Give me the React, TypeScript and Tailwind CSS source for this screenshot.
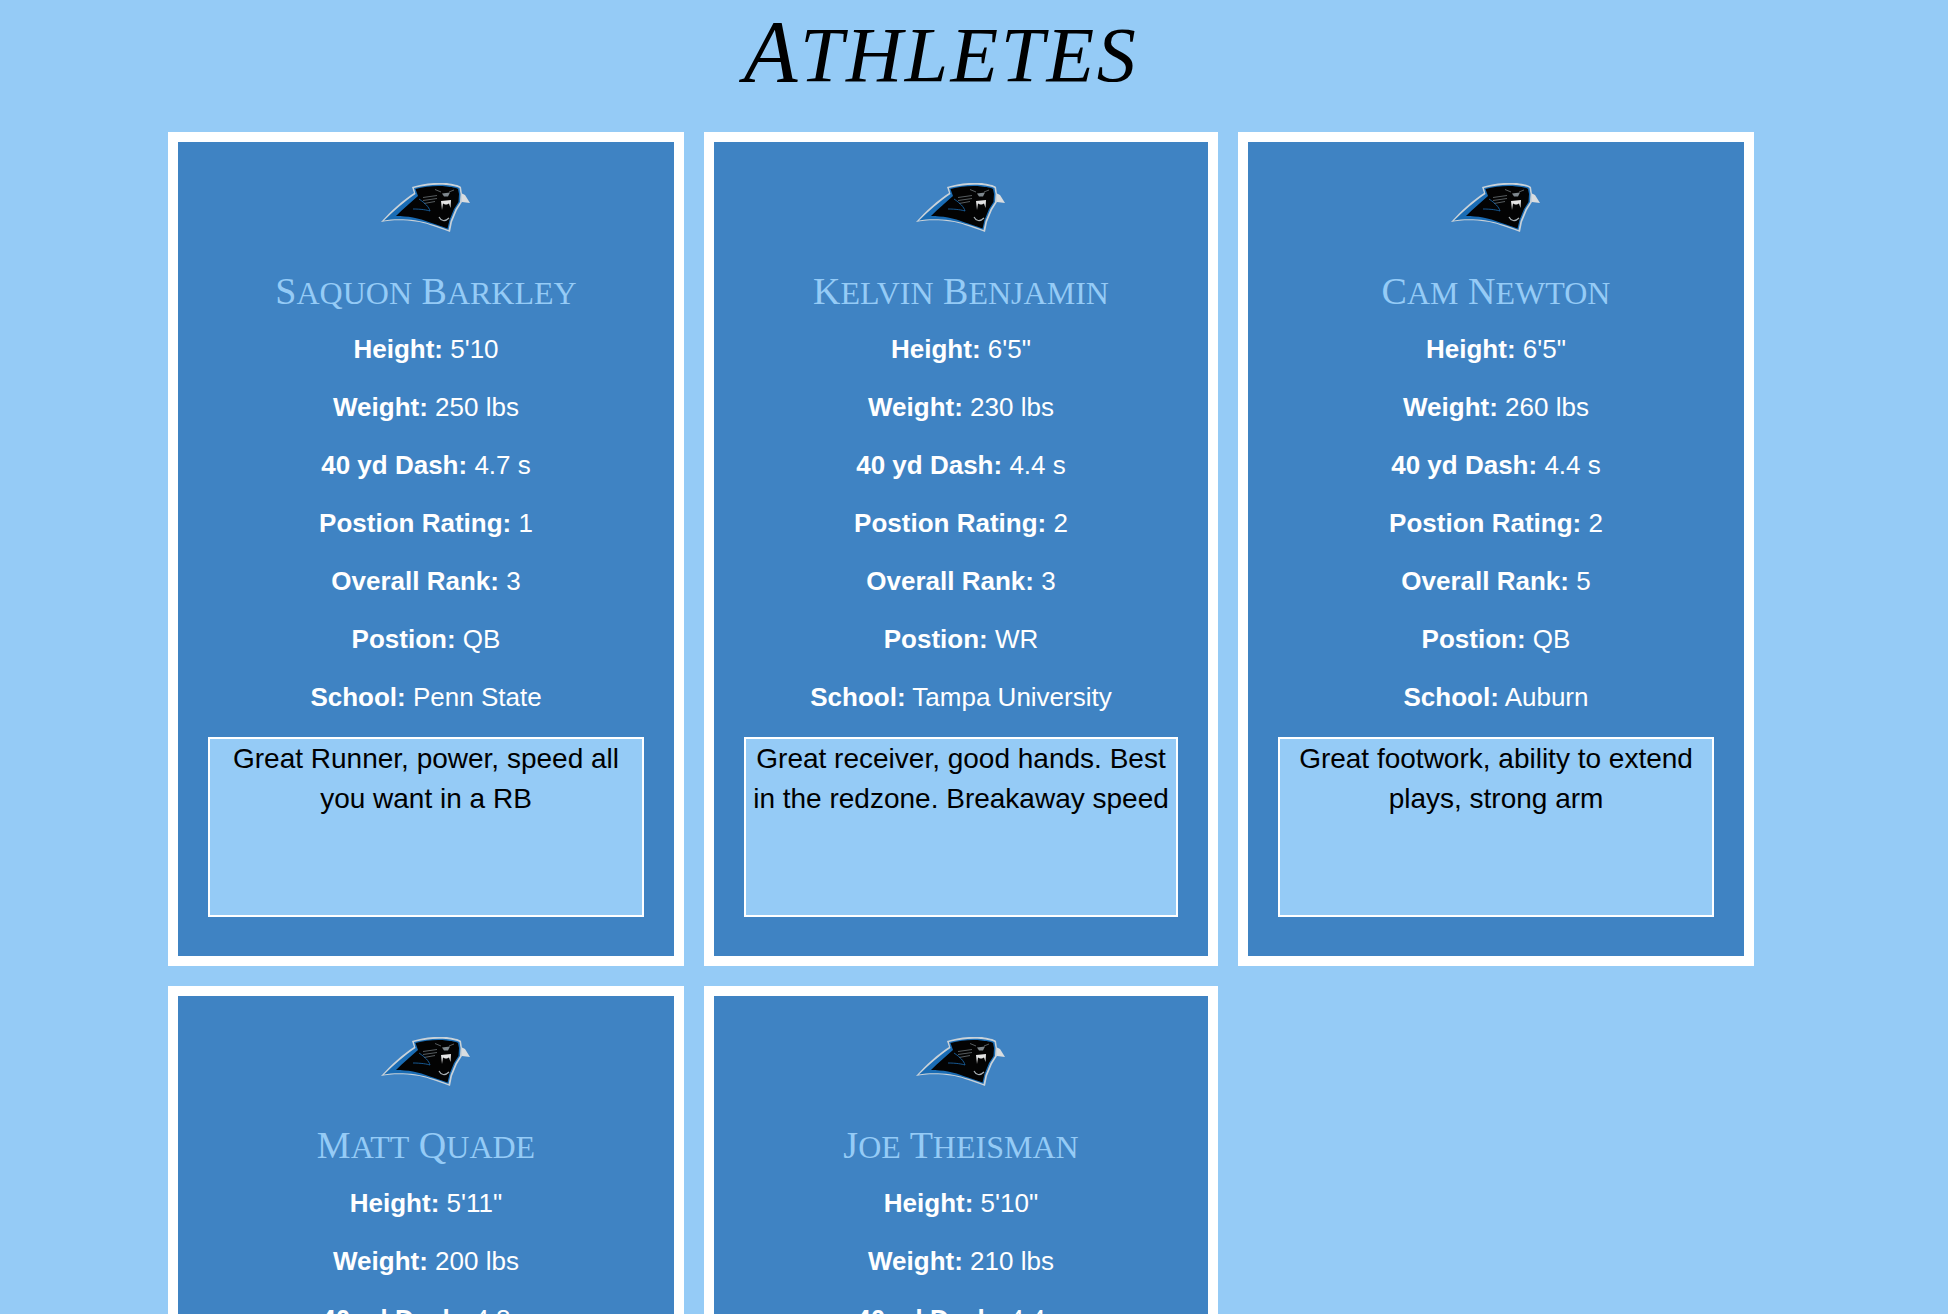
const athletes = [
  {
    name: "Saquon Barkley",
    stats: [
      ["Height:", "5'10"],
      ["Weight:", "250 lbs"],
      ["40 yd Dash:", "4.7 s"],
      ["Postion Rating:", "1"],
      ["Overall Rank:", "3"],
      ["Postion:", "QB"],
      ["School:", "Penn State"],
    ],
    notes: "Great Runner, power, speed all you want in a RB",
  },
  {
    name: "Kelvin Benjamin",
    stats: [
      ["Height:", "6'5\""],
      ["Weight:", "230 lbs"],
      ["40 yd Dash:", "4.4 s"],
      ["Postion Rating:", "2"],
      ["Overall Rank:", "3"],
      ["Postion:", "WR"],
      ["School:", "Tampa University"],
    ],
    notes: "Great receiver, good hands. Best in the redzone. Breakaway speed",
  },
  {
    name: "Cam Newton",
    stats: [
      ["Height:", "6'5\""],
      ["Weight:", "260 lbs"],
      ["40 yd Dash:", "4.4 s"],
      ["Postion Rating:", "2"],
      ["Overall Rank:", "5"],
      ["Postion:", "QB"],
      ["School:", "Auburn"],
    ],
    notes: "Great footwork, ability to extend plays, strong arm",
  },
  {
    name: "Matt Quade",
    stats: [
      ["Height:", "5'11\""],
      ["Weight:", "200 lbs"],
      ["40 yd Dash:", "4.8 s"],
    ],
    notes: "",
  },
  {
    name: "Joe Theisman",
    stats: [
      ["Height:", "5'10\""],
      ["Weight:", "210 lbs"],
      ["40 yd Dash:", "4.4 s"],
    ],
    notes: "",
  },
];

function PantherLogo() {
  return (
    <svg viewBox="0 0 90 50" className="w-[90px] h-[50px]">
      {/* Mane tip */}
      <path d="M78 9 L84 12 L89 20 L81 19 Z" fill="#d9dde0" />
      {/* Silver outline */}
      <path
        d="M0 39 C10 28 22 17 33 10 L31 4 C40 1 55 -1 66 0 C72 1 78 2 80 4 L81 11 L81 19 L76 27 L71 39 L69 49 C62 46 55 44 49 42 C36 37 14 36 0 39 Z"
        fill="#c9d2d9"
      />
      {/* Blue edge */}
      <path
        d="M3 37.5 C13 28 24 18 34.5 11 L33 5 C42 2.5 55 1 65 2 C71 2.5 76 3.5 78.5 5 L79.5 11 L79 19 L74.5 26 L69.5 38 L67.5 47 C60 44 54 42 48 40.5 C36 36 14 35 3 37.5 Z"
        fill="#1a6cb4"
      />
      {/* Black body */}
      <path
        d="M15 33 C22 26 30 19 37 13 L34.5 6 C44 3.5 56 2.5 65 3.5 C70 4 75 4.5 77 6 L78 11 L77.5 19 L73 26 L68.5 37 L66.5 45.5 C60 43 54 41 49 39.5 C38 35 26 33 15 33 Z"
        fill="#030303"
      />
      {/* Whiskers and brow */}
      <path
        d="M42 14.5 L56 12.5 M42 17.5 L56 15.5 M43 20.5 L54 18.5 M54 6.5 L60 9 M73 7 L68 9"
        stroke="#8f989e"
        strokeWidth="0.6"
        fill="none"
      />
      {/* Nose */}
      <path d="M61 10.5 L69 9.5 L67 13.5 L63 13.5 Z" fill="#7f888e" />
      {/* Teeth */}
      <path d="M60 18 L70 17 L69.5 25 L68 20.5 L66 21.5 L64 21.5 L62 20.5 L61 27 Z" fill="#e4e4e4" />
      {/* Lower jaw */}
      <path d="M58 34 C60 38 64 39 68 35" stroke="#a8b0b5" strokeWidth="1.2" fill="none" />
      {/* Blue shoulder line */}
      <path d="M38 16 C44 20 48 24 49 28 C46 27 40 26 32 26" stroke="#1a6cb4" strokeWidth="0.8" fill="none" />
    </svg>
  );
}

// Playfair-style small caps: first letter of each word a bit taller than the rest
function SmallCaps({ text, big, small }: { text: string; big: string; small: string }) {
  return (
    <>
      {text.split(" ").map((word, i) => (
        <span key={word}>
          <span className={big}>
            {i > 0 && " "}
            {word[0]}
          </span>
          <span className={`${small} uppercase`}>{word.slice(1)}</span>
        </span>
      ))}
    </>
  );
}

function AthleteCard({ name, stats, notes }: (typeof athletes)[number]) {
  return (
    <div className="h-[834px] border-[10px] border-white bg-[#3f83c3] pt-[41px] px-[30px] flex flex-col items-center">
      <PantherLogo />
      <h2 className="mt-[32px] h-[52px] leading-[52px] text-[#95cbf6] whitespace-nowrap [font-family:'Liberation_Serif',serif]">
        <SmallCaps text={name} big="text-[38px]" small="text-[32px]" />
      </h2>
      <div className="flex flex-col items-center text-white text-[26px] leading-[58px] mt-[3px] [font-family:'Liberation_Sans',sans-serif]">
        {stats.map(([label, value]) => (
          <p key={label}>
            <b>{label}</b> {value}
          </p>
        ))}
      </div>
      {notes && (
        <div className="mt-[11px] w-full h-[180px] border-2 border-white bg-[#95cbf6] text-center text-black text-[28px] leading-[40px] [font-family:'Liberation_Sans',sans-serif]">
          {notes}
        </div>
      )}
    </div>
  );
}

export default function App() {
  return (
    <div className="h-screen overflow-hidden bg-[#95cbf6]">
      <h1 className="h-[132px] pr-[66px] pt-[6px] text-center text-black leading-[92px] italic whitespace-nowrap tracking-[2.5px] [font-family:'Liberation_Serif',serif]">
        <SmallCaps text="Athletes" big="text-[88px]" small="text-[78px]" />
      </h1>
      <div className="ml-[168px] grid grid-cols-[516px_514px_516px] gap-x-5 gap-y-5">
        {athletes.map((a) => (
          <AthleteCard key={a.name} {...a} />
        ))}
      </div>
    </div>
  );
}
